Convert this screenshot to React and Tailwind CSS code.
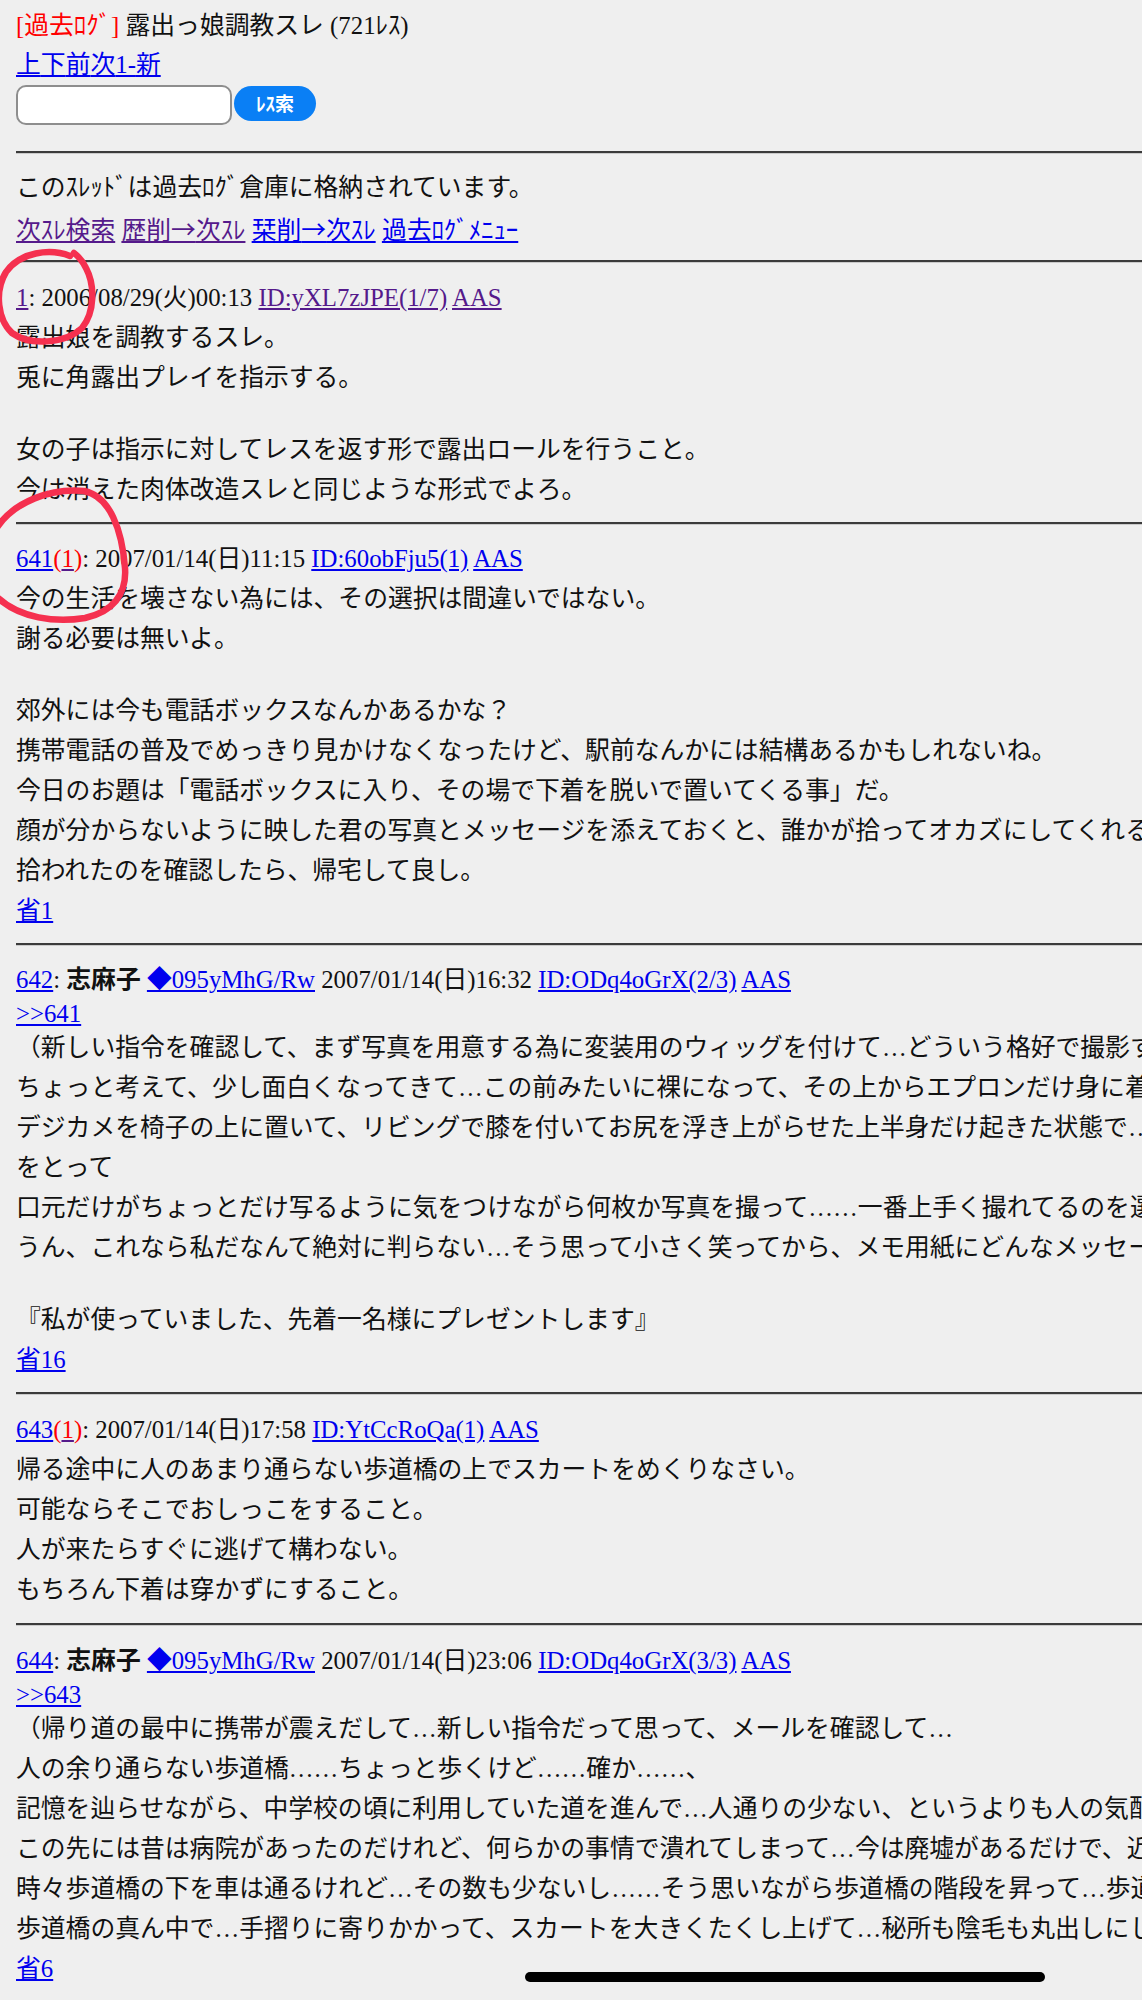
import React from "react";

const blue = "text-[#0000ee] underline";
const purple = "text-[#551a8b] underline";
const red = "text-[#ff0000]";

const Line = ({ children }) => (
  <div className="h-[40px] leading-[40px]">{children}</div>
);

const Short = ({ children }) => (
  <div className="h-[28px] leading-[28px]">{children}</div>
);

const Blank = () => <div className="h-[32px]"></div>;

const Rule = ({ className }) => (
  <div className={className}>
    <div className="h-[2px] bg-[#3b3b3b] shadow-[0_1px_0_#cacaca]"></div>
  </div>
);

const Arrow = () => <span className="font-['Noto_Sans_CJK_JP',sans-serif]">→</span>;

const Body = ({ lines }) =>
  lines.map((t, i) => (t === "" ? <Blank key={i} /> : <Line key={i}>{t}</Line>));

const Trip = () => (
  <>
    <b className="font-bold">志麻子</b> <a className={blue}>◆095yMhG/Rw</a>
  </>
);

const Vote = () => (
  <>
    <span className={red}>(</span>
    <a className={red + " underline decoration-[#551a8b]"}>1</a>
    <span className={red}>)</span>
  </>
);

const post1 = [
  "露出娘を調教するスレ。",
  "兎に角露出プレイを指示する。",
  "",
  "女の子は指示に対してレスを返す形で露出ロールを行うこと。",
  "今は消えた肉体改造スレと同じような形式でよろ。",
];

const post641 = [
  "今の生活を壊さない為には、その選択は間違いではない。",
  "謝る必要は無いよ。",
  "",
  "郊外には今も電話ボックスなんかあるかな？",
  "携帯電話の普及でめっきり見かけなくなったけど、駅前なんかには結構あるかもしれないね。",
  "今日のお題は「電話ボックスに入り、その場で下着を脱いで置いてくる事」だ。",
  "顔が分からないように映した君の写真とメッセージを添えておくと、誰かが拾ってオカズにしてくれる",
  "拾われたのを確認したら、帰宅して良し。",
];

const post642 = [
  "（新しい指令を確認して、まず写真を用意する為に変装用のウィッグを付けて…どういう格好で撮影す",
  "ちょっと考えて、少し面白くなってきて…この前みたいに裸になって、その上からエプロンだけ身に着",
  "デジカメを椅子の上に置いて、リビングで膝を付いてお尻を浮き上がらせた上半身だけ起きた状態で…",
  "をとって",
  "口元だけがちょっとだけ写るように気をつけながら何枚か写真を撮って……一番上手く撮れてるのを選",
  "うん、これなら私だなんて絶対に判らない…そう思って小さく笑ってから、メモ用紙にどんなメッセー",
  "",
  "『私が使っていました、先着一名様にプレゼントします』",
];

const post643 = [
  "帰る途中に人のあまり通らない歩道橋の上でスカートをめくりなさい。",
  "可能ならそこでおしっこをすること。",
  "人が来たらすぐに逃げて構わない。",
  "もちろん下着は穿かずにすること。",
];

const post644 = [
  "（帰り道の最中に携帯が震えだして…新しい指令だって思って、メールを確認して…",
  "人の余り通らない歩道橋……ちょっと歩くけど……確か……、",
  "記憶を辿らせながら、中学校の頃に利用していた道を進んで…人通りの少ない、というよりも人の気配",
  "この先には昔は病院があったのだけれど、何らかの事情で潰れてしまって…今は廃墟があるだけで、近",
  "時々歩道橋の下を車は通るけれど…その数も少ないし……そう思いながら歩道橋の階段を昇って…歩道",
  "歩道橋の真ん中で…手摺りに寄りかかって、スカートを大きくたくし上げて…秘所も陰毛も丸出しにし",
];

export default function App() {
  return (
    <div className="relative min-h-[2000px] w-full overflow-hidden bg-[#efefef] pl-[16px] pt-[6px] font-['Liberation_Serif','Noto_Sans_CJK_JP',serif] text-[24.8px] text-[#111] whitespace-nowrap">
      <div className="h-[40px] leading-[40px]">
        <span className={red}>[過去ﾛｸﾞ]</span> 露出っ娘調教スレ (721ﾚｽ)
      </div>
      <div className="h-[38px] leading-[38px]">
        <a className={blue}>上</a>
        <a className={blue}>下</a>
        <a className={blue}>前</a>
        <a className={blue}>次</a>
        <a className={blue}>1-</a>
        <a className={blue}>新</a>
      </div>
      <div className="mt-[1px] flex items-start gap-[2px]">
        <div className="h-[40px] w-[216px] rounded-[10px] border-2 border-[#8e8e8e] bg-white"></div>
        <div className="mt-[1px] flex h-[35px] w-[82px] items-center justify-center rounded-full bg-[#0a7ff5] font-['Noto_Sans_CJK_JP',sans-serif] text-[19px] font-bold text-white">
          ﾚｽ索
        </div>
      </div>

      <Rule className="mt-[26px]" />
      <div className="mt-[15px]">
        <Line>このｽﾚｯﾄﾞは過去ﾛｸﾞ倉庫に格納されています。</Line>
        <Line>
          <a className={purple}>次ｽﾚ検索</a>{" "}
          <a className={purple}>
            歴削<Arrow />次ｽﾚ
          </a>{" "}
          <a className={blue}>
            栞削<Arrow />次ｽﾚ
          </a>{" "}
          <a className={blue}>過去ﾛｸﾞﾒﾆｭｰ</a>
        </Line>
      </div>

      <Rule className="mt-[12px]" />
      <div className="mt-[16px]">
        <Line>
          <a className={purple}>1</a>: 2006/08/29(火)00:13{" "}
          <a className={purple}>ID:yXL7zJPE(1/7)</a> <a className={purple}>AAS</a>
        </Line>
        <Body lines={post1} />
      </div>

      <Rule className="mt-[12px]" />
      <div className="mt-[15px]">
        <Line>
          <a className={blue}>641</a>
          <Vote />: 2007/01/14(日)11:15 <a className={blue}>ID:60obFju5(1)</a>{" "}
          <a className={blue}>AAS</a>
        </Line>
        <Body lines={post641} />
        <Line>
          <a className={blue}>省1</a>
        </Line>
      </div>

      <Rule className="mt-[12px]" />
      <div className="mt-[15px]">
        <Line>
          <a className={blue}>642</a>: <Trip /> 2007/01/14(日)16:32{" "}
          <a className={blue}>ID:ODq4oGrX(2/3)</a> <a className={blue}>AAS</a>
        </Line>
        <Short>
          <a className={blue}>&gt;&gt;641</a>
        </Short>
        <Body lines={post642} />
        <Line>
          <a className={blue}>省16</a>
        </Line>
      </div>

      <Rule className="mt-[12px]" />
      <div className="mt-[16px]">
        <Line>
          <a className={blue}>643</a>
          <Vote />: 2007/01/14(日)17:58 <a className={blue}>ID:YtCcRoQa(1)</a>{" "}
          <a className={blue}>AAS</a>
        </Line>
        <Body lines={post643} />
      </div>

      <Rule className="mt-[13px]" />
      <div className="mt-[16px]">
        <Line>
          <a className={blue}>644</a>: <Trip /> 2007/01/14(日)23:06{" "}
          <a className={blue}>ID:ODq4oGrX(3/3)</a> <a className={blue}>AAS</a>
        </Line>
        <Short>
          <a className={blue}>&gt;&gt;643</a>
        </Short>
        <Body lines={post644} />
        <Line>
          <a className={blue}>省6</a>
        </Line>
      </div>

      {/* hand-drawn marks over the screenshot */}
      <svg
        className="pointer-events-none absolute left-0 top-0"
        width="160"
        height="660"
        viewBox="0 0 160 660"
        fill="none"
      >
        <path
          d="M70 256 C50 248 20 252 6 272 C-6 292 -2 320 12 333 C30 346 65 344 82 328 C95 312 95 285 86 268 C82 260 78 256 74 253"
          stroke="#f5304f"
          strokeWidth="6.5"
          strokeLinecap="round"
        />
        <path
          d="M-2 526 C15 502 50 488 84 491 C110 496 122 530 125 568 C127 595 112 612 85 618 C55 623 20 618 -2 598"
          stroke="#f5304f"
          strokeWidth="6.5"
          strokeLinecap="round"
        />
      </svg>

      {/* home indicator */}
      <div className="absolute left-[525px] top-[1972px] h-[10px] w-[520px] rounded-full bg-black"></div>
    </div>
  );
}
